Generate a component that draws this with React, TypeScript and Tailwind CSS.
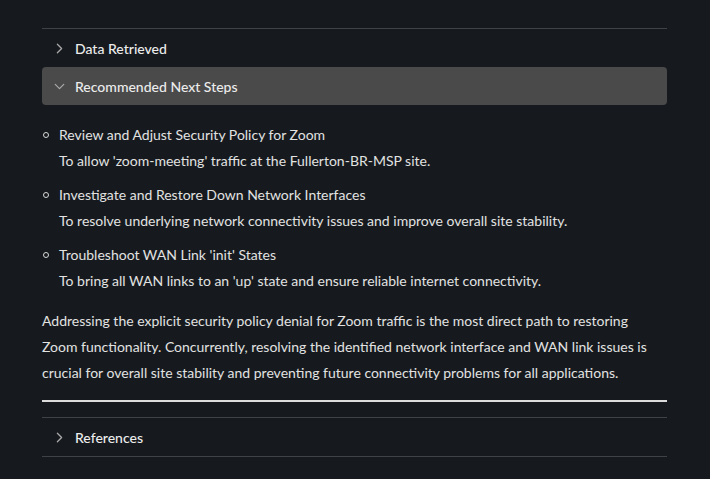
import { ChevronRight, ChevronDown } from "lucide-react";

const steps = [
  {
    title: "Review and Adjust Security Policy for Zoom",
    desc: "To allow 'zoom-meeting' traffic at the Fullerton-BR-MSP site.",
  },
  {
    title: "Investigate and Restore Down Network Interfaces",
    desc: "To resolve underlying network connectivity issues and improve overall site stability.",
  },
  {
    title: "Troubleshoot WAN Link 'init' States",
    desc: "To bring all WAN links to an 'up' state and ensure reliable internet connectivity.",
  },
];

function Section({ title, open }: { title: string; open?: boolean }) {
  return (
    <div
      className={
        open
          ? "flex h-[38px] items-center gap-[7px] rounded-[4px] bg-[#4a4a4a] pl-[9px]"
          : "flex h-[38px] items-center gap-[7px] pl-[9px]"
      }
    >
      {open ? (
        <ChevronDown size={17} strokeWidth={1.75} className="text-[#a9a9a9]" />
      ) : (
        <ChevronRight size={17} strokeWidth={1.75} className="text-[#a9a9a9]" />
      )}
      <span className="text-[14px] font-medium text-[#ececec]">{title}</span>
    </div>
  );
}

export default function App() {
  return (
    <div
      className="min-h-[479px] bg-[#161a1e] px-[42px] pt-[28px] pr-[43px] text-[#e2e2e2]"
      style={{ fontFamily: "Lato, 'Noto Sans', sans-serif" }}
    >
      <div className="border-t border-[#3f4246]">
        <Section title="Data Retrieved" />
        <Section title="Recommended Next Steps" open />
      </div>

      <ul className="mt-[17px] flex flex-col gap-[8px] text-[14px] leading-[26px]">
        {steps.map((s) => (
          <li key={s.title} className="flex">
            <span className="mt-[10px] mr-[8px] ml-[1px] h-[6px] w-[6px] shrink-0 rounded-full border border-[#d8d8d8]" />
            <div className="pl-[2px]">
              <div>{s.title}</div>
              <div>{s.desc}</div>
            </div>
          </li>
        ))}
      </ul>

      <p className="mt-[14px] pr-[8px] text-[14px] leading-[26px]">
        Addressing the explicit security policy denial for Zoom traffic is the most direct path to
        restoring Zoom functionality. Concurrently, resolving the identified network interface and
        WAN link issues is crucial for overall site stability and preventing future connectivity
        problems for all applications.
      </p>

      <div className="mt-[14px] h-[2px] bg-[#dcdcdc]" />

      <div className="mt-[15px] border-y border-[#3f4246]">
        <Section title="References" />
      </div>
    </div>
  );
}
